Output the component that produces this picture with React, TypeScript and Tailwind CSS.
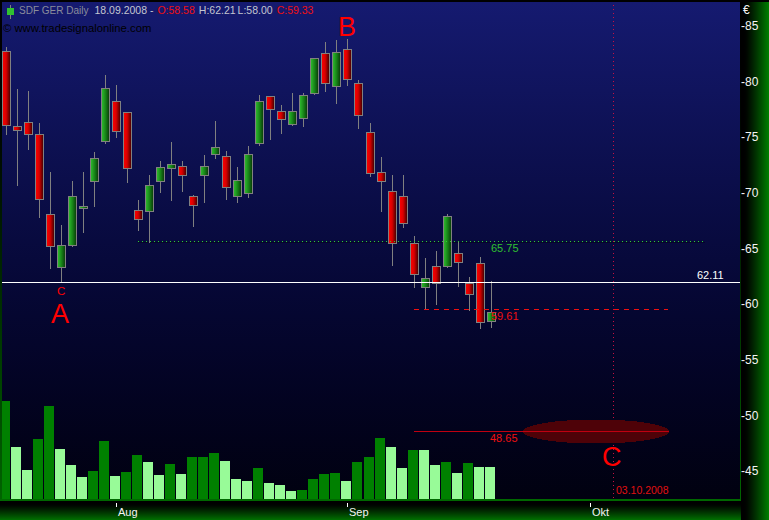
const font = "font-['Liberation_Sans',Arial,sans-serif]";

// x = pixel column of the wick, [wick top, body top, body bottom, wick bottom]
const candles: { x: number; up: boolean; w: [number, number, number, number] }[] = [
  { x: 6, up: false, w: [47, 51, 125, 135] },
  { x: 17, up: false, w: [89, 126, 130, 186] },
  { x: 28, up: false, w: [91, 122, 134, 150] },
  { x: 39, up: false, w: [123, 134, 199, 218] },
  { x: 50, up: false, w: [172, 214, 246, 269] },
  { x: 61, up: true, w: [225, 245, 267, 282] },
  { x: 72, up: true, w: [181, 196, 245, 247] },
  { x: 83, up: true, w: [172, 206, 208, 233] },
  { x: 94, up: true, w: [152, 158, 181, 207] },
  { x: 105, up: true, w: [75, 88, 141, 144] },
  { x: 116, up: false, w: [85, 101, 131, 138] },
  { x: 127, up: false, w: [112, 112, 168, 183] },
  { x: 138, up: false, w: [200, 210, 219, 231] },
  { x: 149, up: true, w: [175, 185, 211, 243] },
  { x: 160, up: true, w: [161, 167, 181, 193] },
  { x: 171, up: true, w: [142, 164, 168, 201] },
  { x: 182, up: false, w: [161, 166, 175, 192] },
  { x: 193, up: false, w: [195, 196, 205, 227] },
  { x: 204, up: true, w: [155, 166, 175, 203] },
  { x: 215, up: true, w: [121, 147, 154, 159] },
  { x: 226, up: false, w: [151, 156, 187, 200] },
  { x: 237, up: true, w: [167, 180, 196, 203] },
  { x: 248, up: true, w: [146, 154, 193, 198] },
  { x: 259, up: true, w: [95, 101, 143, 146] },
  { x: 270, up: false, w: [96, 96, 109, 140] },
  { x: 281, up: false, w: [105, 111, 119, 134] },
  { x: 292, up: true, w: [93, 111, 124, 126] },
  { x: 303, up: true, w: [93, 95, 118, 127] },
  { x: 314, up: true, w: [58, 58, 93, 95] },
  { x: 325, up: false, w: [42, 53, 83, 92] },
  { x: 336, up: true, w: [40, 52, 86, 104] },
  { x: 347, up: false, w: [39, 49, 79, 86] },
  { x: 358, up: false, w: [80, 83, 115, 129] },
  { x: 370, up: false, w: [123, 132, 173, 177] },
  { x: 381, up: false, w: [157, 172, 181, 212] },
  { x: 392, up: false, w: [175, 191, 243, 266] },
  { x: 403, up: false, w: [175, 196, 223, 228] },
  { x: 414, up: false, w: [236, 243, 274, 288] },
  { x: 425, up: true, w: [258, 278, 287, 309] },
  { x: 436, up: false, w: [251, 266, 283, 305] },
  { x: 447, up: true, w: [214, 216, 266, 268] },
  { x: 458, up: false, w: [241, 253, 262, 287] },
  { x: 469, up: false, w: [277, 283, 294, 311] },
  { x: 480, up: false, w: [257, 263, 322, 329] },
  { x: 491, up: true, w: [281, 312, 321, 328] },
];

// volume bar tops, d = dark green
const volume: { top: number; d: boolean }[] = [
  { top: 401, d: true },
  { top: 447, d: false },
  { top: 470, d: false },
  { top: 439, d: true },
  { top: 406, d: true },
  { top: 449, d: false },
  { top: 465, d: false },
  { top: 477, d: false },
  { top: 471, d: true },
  { top: 441, d: true },
  { top: 476, d: false },
  { top: 472, d: true },
  { top: 455, d: true },
  { top: 462, d: false },
  { top: 475, d: false },
  { top: 464, d: true },
  { top: 474, d: false },
  { top: 457, d: true },
  { top: 457, d: true },
  { top: 453, d: true },
  { top: 461, d: false },
  { top: 479, d: false },
  { top: 481, d: false },
  { top: 468, d: true },
  { top: 483, d: false },
  { top: 485, d: false },
  { top: 491, d: false },
  { top: 490, d: true },
  { top: 479, d: true },
  { top: 474, d: true },
  { top: 473, d: true },
  { top: 481, d: false },
  { top: 462, d: true },
  { top: 457, d: true },
  { top: 438, d: true },
  { top: 447, d: false },
  { top: 468, d: false },
  { top: 450, d: true },
  { top: 450, d: false },
  { top: 465, d: false },
  { top: 462, d: true },
  { top: 473, d: false },
  { top: 463, d: true },
  { top: 467, d: false },
  { top: 467, d: false },
];

const priceLabels = [85, 80, 75, 70, 65, 60, 55, 50, 45];

function Chart() {
  return (
    <svg viewBox="2 2 738 497" className="block h-[497px] w-[738px]" fontFamily="'Liberation Sans', Arial, sans-serif">
      <defs>
        <linearGradient id="red">
          <stop offset="0" stopColor="#ff0000" />
          <stop offset="0.45" stopColor="#d80000" />
          <stop offset="1" stopColor="#3c0000" />
        </linearGradient>
        <linearGradient id="green">
          <stop offset="0" stopColor="#30c030" />
          <stop offset="0.5" stopColor="#188418" />
          <stop offset="1" stopColor="#083808" />
        </linearGradient>
      </defs>

      <g shapeRendering="crispEdges">
        {volume.map((v, i) => {
          const c = candles[i].x;
          const x = i === 0 ? 2 : c - 6;
          return (
            <rect key={c} x={x} y={v.top} width={i === 0 ? 8 : 10} height={499 - v.top} fill={v.d ? "#008000" : "#98fb98"} />
          );
        })}

        <rect x={138} y={242} width={567} height={1} fill="#05052a" />

        {candles.map((c) => (
          <g key={c.x}>
            <rect x={c.x} y={c.w[0]} width={1} height={c.w[3] - c.w[0]} fill="#808080" />
            <rect x={c.x - 3.5} y={c.w[1] + 0.5} width={8} height={c.w[2] - c.w[1]} fill={c.up ? "url(#green)" : "url(#red)"} stroke="#808080" strokeWidth={1} />
          </g>
        ))}

        <line x1={138} x2={705} y1={241.5} y2={241.5} stroke="#30d030" strokeDasharray="1 3" />
        <line x1={613.5} x2={613.5} y1={5} y2={499} stroke="#c81040" strokeDasharray="1 3" />
        <rect x={2} y={282} width={738} height={1} fill="#ffffff" />
        <line x1={414} x2={668} y1={309.5} y2={309.5} stroke="#f01010" strokeDasharray="5 5" />
        <ellipse cx={596} cy={431.5} rx={73} ry={12} fill="#4e0208" />
        <rect x={414} y={431} width={255} height={1} fill="#c00010" />
      </g>

      <text x={697} y={279} fontSize={11} fill="#ffffff">62.11</text>
      <text x={491} y={252} fontSize={11} fill="#30c030">65.75</text>
      <text x={491} y={320} fontSize={11} fill="#f01010">59.61</text>
      <text x={490} y={442} fontSize={11} fill="#f01010">48.65</text>
      <text x={616} y={494} fontSize={10.5} fill="#e01010">03.10.2008</text>
      <text x={57} y={295} fontSize={11.5} fill="#ff0000">C</text>
      <text x={51} y={323} fontSize={27} fill="#ff0000">A</text>
      <text x={338} y={36} fontSize={27} fill="#ff0000">B</text>
      <text x={602} y={466} fontSize={27} fill="#ff0000">C</text>
    </svg>
  );
}

function Legend() {
  return (
    <div className="absolute left-0 top-0 leading-[13px]">
      <div className="flex items-center pl-[5px] pt-[2px]">
        <div className="relative mr-[5px] h-[14px] w-[7px]">
          <div className="absolute left-[3px] top-0 h-[14px] w-px bg-[#808080]" />
          <div className="absolute left-0 top-[3px] h-[7px] w-[7px] bg-[#30c030]" />
        </div>
        <div className="mb-[2px] flex text-[10.5px]">
          <span className="text-[10px] text-[#8a8c9c]">SDF GER Daily</span>
          <span className="ml-[6px] text-[#c4c6d0]">18.09.2008 -</span>
          <span className="ml-[4px] text-[#f01010]">O:58.58</span>
          <span className="ml-[4px] text-[#c4c6d0]">H:62.21</span>
          <span className="ml-[2px] text-[#c4c6d0]">L:58.00</span>
          <span className="ml-[4px] text-[#f01010]">C:59.33</span>
        </div>
      </div>
      <div className="pl-px pt-[3px] text-[11.3px] text-black">© www.tradesignalonline.com</div>
    </div>
  );
}

function MonthTick({ label, className }: { label: string; className: string }) {
  return (
    <div className={`flex items-start ${className}`}>
      <div className="mt-[2px] h-[4px] w-px bg-white" />
      <span className="ml-px mt-[5px] text-[11px] leading-[13px] text-[#f4f4f4]">{label}</span>
    </div>
  );
}

export default function App() {
  return (
    <div className={`flex h-[520px] w-[769px] flex-col overflow-hidden bg-black ${font}`}>
      <div className="h-[2px] shrink-0 bg-black" />
      <div className="flex min-h-0 flex-1">
        <div className="flex w-[741px] flex-col">
          <div className="flex h-[497px]">
            <div className="w-[2px] bg-linear-to-b from-black to-[#006400]" />
            <div className="relative h-[497px] w-[738px] bg-linear-to-b from-[#151a70] to-[#010110]">
              <Chart />
              <Legend />
            </div>
            <div className="w-px bg-linear-to-b from-black to-[#006400]" />
          </div>
          <div className="h-[2px] bg-[#006800]" />
          <div className="flex h-[19px] bg-linear-to-b from-black to-[#007000] pl-[116px]">
            <MonthTick label="Aug" className="w-[231px]" />
            <MonthTick label="Sep" className="w-[243px]" />
            <MonthTick label="Okt" className="w-[40px]" />
          </div>
        </div>
        <div className="flex w-[28px] flex-col bg-linear-to-r from-black to-[#008000] text-[12px] leading-[14px] text-[#f4f4f4]">
          <span className="h-[17px] pl-[2px] pt-px">€</span>
          {priceLabels.map((p) => (
            <span key={p} className="h-[55.67px] shrink-0">-{p}</span>
          ))}
        </div>
      </div>
    </div>
  );
}
